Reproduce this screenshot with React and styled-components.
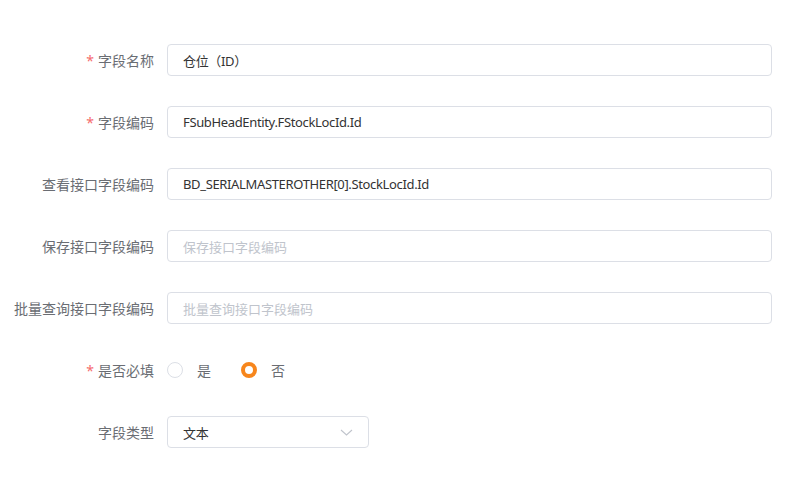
import React from 'react';
import styled, { createGlobalStyle } from 'styled-components';

const GlobalStyle = createGlobalStyle`
    body {
        margin: 0;
        background: #fff;
        font-family: "Microsoft YaHei", "Noto Sans", "Noto Sans CJK SC", sans-serif;
    }
`

const Form = styled.div`
    width: 788px;
    padding: 44px 16px 0 0;
    box-sizing: border-box;
`

const Row = styled.div`
    display: flex;
    align-items: center;
    height: 32px;
    margin-bottom: 30px;
`

const Label = styled.div`
    width: 167px;
    padding-right: 13px;
    box-sizing: border-box;
    text-align: right;
    font-size: 14px;
    color: #6a6d73;
    flex-shrink: 0;
    white-space: nowrap;
`

const Star = styled.span`
    color: #f56c6c;
    margin-right: 4px;
`

const Input = styled.div`
    flex: ${p => (p.$width ? '0 0 auto' : '1')};
    width: ${p => (p.$width ? p.$width + 'px' : 'auto')};
    height: 32px;
    box-sizing: border-box;
    border: 1px solid #dcdfe6;
    border-radius: 4px;
    padding: 0 15px;
    display: flex;
    align-items: center;
    justify-content: space-between;
    font-size: 13px;
    letter-spacing: ${p => (p.$placeholder ? '0' : '-0.35px')};
    color: ${p => (p.$placeholder ? '#c0c4cc' : '#333')};
`

const RadioGroup = styled.div`
    display: flex;
    align-items: center;
    gap: 30px;
`

const Radio = styled.label`
    display: flex;
    align-items: center;
    gap: 14px;
    font-size: 14px;
    color: #6a6d73;
`

const Dot = styled.span`
    width: 16px;
    height: 16px;
    box-sizing: border-box;
    border-radius: 50%;
    border: ${p => (p.$checked ? '4.5px solid #f7861c' : '1px solid #dcdfe6')};
    background: #fff;
`

const Arrow = () => (
    <svg width="13" height="7" viewBox="0 0 13 7">
        <path d="M1 1l5.5 5L12 1" fill="none" stroke="#c0c4cc" strokeWidth="1.1" />
    </svg>
)

const fields = [
    { label: '字段名称', required: true, value: '仓位（ID）' },
    { label: '字段编码', required: true, value: 'FSubHeadEntity.FStockLocId.Id' },
    { label: '查看接口字段编码', value: 'BD_SERIALMASTEROTHER[0].StockLocId.Id' },
    { label: '保存接口字段编码', placeholder: '保存接口字段编码' },
    { label: '批量查询接口字段编码', placeholder: '批量查询接口字段编码' },
]

const App = () => {
    return (
        <>
            <GlobalStyle />
            <Form>
                {fields.map(f => (
                    <Row key={f.label}>
                        <Label>
                            {f.required ? <Star>*</Star> : null}
                            {f.label}
                        </Label>
                        <Input $placeholder={!f.value}>{f.value || f.placeholder}</Input>
                    </Row>
                ))}
                <Row>
                    <Label><Star>*</Star>是否必填</Label>
                    <RadioGroup>
                        <Radio><Dot />是</Radio>
                        <Radio><Dot $checked />否</Radio>
                    </RadioGroup>
                </Row>
                <Row>
                    <Label>字段类型</Label>
                    <Input $width={202}>
                        文本
                        <Arrow />
                    </Input>
                </Row>
            </Form>
        </>
    )
}

export default App
